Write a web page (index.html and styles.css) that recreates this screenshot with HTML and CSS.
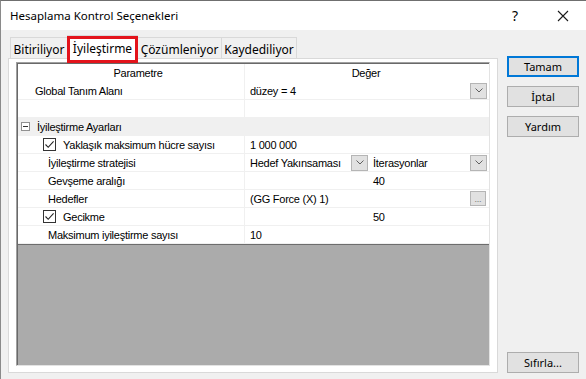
FILE: index.html
```html
<!DOCTYPE html>
<html>
	<head>
		<meta charset="UTF-8">
		<title>Hesaplama Kontrol Seçenekleri</title>
		<link rel="stylesheet" href="styles.css">
	</head>
	<body>
		<div class="window">
			<div class="titlebar">
				<span class="title">Hesaplama Kontrol Seçenekleri</span>
				<span class="help">?</span>
				<span class="close">
					<svg width="12" height="12" viewBox="0 0 12 12"><path d="M1 1L11 11M11 1L1 11" stroke="#1a1a1a" stroke-width="1.1" fill="none"/></svg>
				</span>
			</div>
			<div class="body">
				<div class="main">
					<div class="tabs">
						<div class="tab t1">Bitiriliyor</div>
						<div class="tab active">İyileştirme</div>
						<div class="tab t3">Çözümleniyor</div>
						<div class="tab t4">Kaydediliyor</div>
					</div>
					<div class="panel">
						<div class="grid">
							<div class="row head">
								<div class="name">Parametre</div>
								<div class="value">Değer</div>
							</div>
							<div class="row">
								<div class="name lvl0">Global Tanım Alanı</div>
								<div class="value"><span class="txt">düzey = 4</span><span class="drop"><svg width="8" height="5" viewBox="0 0 8 5"><path d="M0.5 0.5L4 4L7.5 0.5" stroke="#606060" fill="none"/></svg></span></div>
							</div>
							<div class="row blank">
								<div class="name"></div>
								<div class="value"></div>
							</div>
							<div class="row category">
								<div class="name lvl0"><span class="toggle"></span>İyileştirme Ayarları</div>
							</div>
							<div class="row">
								<div class="name lvl1"><span class="check"><svg width="11" height="11" viewBox="0 0 11 11"><path d="M1.5 5.5L4.2 8.3L9.6 2.3" stroke="#222" stroke-width="1.1" fill="none"/></svg></span>Yaklaşık maksimum hücre sayısı</div>
								<div class="value"><span class="txt">1 000 000</span></div>
							</div>
							<div class="row">
								<div class="name lvl2">İyileştirme stratejisi</div>
								<div class="value split">
									<div class="sub"><span class="txt">Hedef Yakınsaması</span><span class="drop"><svg width="8" height="5" viewBox="0 0 8 5"><path d="M0.5 0.5L4 4L7.5 0.5" stroke="#606060" fill="none"/></svg></span></div>
									<div class="sub second"><span class="txt">İterasyonlar</span><span class="drop"><svg width="8" height="5" viewBox="0 0 8 5"><path d="M0.5 0.5L4 4L7.5 0.5" stroke="#606060" fill="none"/></svg></span></div>
								</div>
							</div>
							<div class="row">
								<div class="name lvl2">Gevşeme aralığı</div>
								<div class="value split">
									<div class="sub"></div>
									<div class="sub second"><span class="txt">40</span></div>
								</div>
							</div>
							<div class="row">
								<div class="name lvl2">Hedefler</div>
								<div class="value"><span class="txt">(GG Force (X) 1)</span><span class="drop dots">...</span></div>
							</div>
							<div class="row">
								<div class="name lvl1"><span class="check"><svg width="11" height="11" viewBox="0 0 11 11"><path d="M1.5 5.5L4.2 8.3L9.6 2.3" stroke="#222" stroke-width="1.1" fill="none"/></svg></span>Gecikme</div>
								<div class="value split">
									<div class="sub"></div>
									<div class="sub second"><span class="txt">50</span></div>
								</div>
							</div>
							<div class="row">
								<div class="name lvl2">Maksimum iyileştirme sayısı</div>
								<div class="value"><span class="txt">10</span></div>
							</div>
							<div class="empty"></div>
						</div>
					</div>
				</div>
				<div class="side">
					<button class="btn default">Tamam</button>
					<button class="btn">İptal</button>
					<button class="btn">Yardım</button>
					<button class="btn reset">Sıfırla...</button>
				</div>
			</div>
		</div>
	</body>
</html>
```

FILE: styles.css
```css
html, body {
	margin: 0;
	padding: 0;
	box-sizing: border-box;
}

*, *::before, *::after {
	box-sizing: inherit;
}

body {
	width: 586px;
	height: 379px;
	overflow: hidden;
	background-color: #f0f0f0;
	font-family: 'Noto Sans', 'Liberation Sans', sans-serif;
	color: #000;
}

.window {
	height: 379px;
	border-top: 1px solid #6f6f6f;
	border-left: 1px solid #8a8a8a;
	display: flex;
	flex-direction: column;
}

.titlebar {
	height: 29px;
	background-color: #fff;
	display: flex;
	align-items: center;
	font-size: 11.5px;
}

.title {
	padding-left: 9px;
	flex: 1;
}

.help {
	font-size: 14px;
	width: 14px;
	margin-right: 31px;
}

.close {
	width: 12px;
	margin-right: 17px;
	display: flex;
}

.body {
	flex: 1;
	display: flex;
	padding: 0 0 6px 7px;
}

.main {
	width: 490px;
	flex: none;
	display: flex;
	flex-direction: column;
}

/* tabs */
.tabs {
	height: 28px;
	display: flex;
	align-items: flex-end;
	padding-left: 2px;
	font-size: 12px;
}

.tab {
	height: 21px;
	display: flex;
	align-items: center;
	justify-content: center;
	padding-top: 3px;
	border: 1px solid #d9d9d9;
	border-bottom: none;
	background-color: #f0f0f0;
	margin-right: -1px;
}

.t1 { width: 58px; }
.t3 { width: 85px; }
.t4 { width: 76px; }

.tab.active {
	position: relative;
	width: 71px;
	height: 24px;
	padding-top: 1px;
	background-color: #fff;
	z-index: 1;
	margin-bottom: -1px;
}

.tab.active::after {
	content: '';
	position: absolute;
	left: -1px;
	right: -1px;
	top: 0;
	bottom: -4px;
	border: 3px solid #e3131b;
}

.panel {
	flex: 1;
	background-color: #fff;
	border: 1px solid #d9d9d9;
	padding: 3px 7px 6px 7px;
	display: flex;
}

/* property grid */
.grid {
	width: 474px;
	min-width: 0;
	overflow: hidden;
	display: flex;
	flex-direction: column;
	border-top: 1px solid #a0a0a0;
	border-left: 1px solid #a0a0a0;
	border-right: 1px solid #e3e3e3;
	border-bottom: 1px solid #e3e3e3;
	box-shadow: inset 1px 1px 0 #696969;
	padding: 1px 0 0 1px;
	font-family: 'Liberation Sans', Arial, sans-serif;
	font-size: 11px;
	letter-spacing: -0.25px;
}

.row {
	height: 18px;
	flex: none;
	display: flex;
	border-bottom: 1px solid #f0f0f0;
}

.name {
	width: 227px;
	flex: none;
	display: flex;
	align-items: center;
	border-right: 1px solid #f0f0f0;
	white-space: nowrap;
}

.value {
	flex: 1;
	min-width: 0;
	display: flex;
	align-items: center;
	padding-right: 2px;
}

.head {
	border-bottom: none;
}

.head .name {
	justify-content: center;
	padding-left: 14px;
}

.head .value {
	justify-content: center;
}

.lvl0 { padding-left: 17px; }
.lvl1 { padding-left: 25px; }
.lvl2 { padding-left: 30px; }

.category {
	background-color: #f0f0f0;
}

.category .name {
	width: auto;
	border-right: none;
	padding-left: 3px;
}

.toggle {
	width: 9px;
	height: 9px;
	border: 1px solid #919191;
	margin-right: 7px;
	position: relative;
	background-color: #fff;
}

.toggle::after {
	content: '';
	position: absolute;
	left: 1px;
	right: 1px;
	top: 3px;
	height: 1px;
	background-color: #333;
}

.check {
	width: 13px;
	height: 13px;
	border: 1px solid #333;
	background-color: #fff;
	margin-right: 7px;
	display: flex;
	align-items: center;
	justify-content: center;
}

.txt {
	flex: 1;
	min-width: 0;
	padding-left: 5px;
	white-space: nowrap;
}

.drop {
	width: 17px;
	height: 16px;
	flex: none;
	background-color: #e1e1e1;
	border: 1px solid #b5b5b5;
	display: flex;
	align-items: center;
	justify-content: center;
}

.dots {
	font-size: 9px;
	color: #777;
	align-items: flex-end;
	padding-bottom: 2px;
	line-height: 8px;
	width: 16px;
	height: 15px;
	margin-right: 1px;
}

.split .sub {
	width: 125px;
	flex: none;
	height: 100%;
	display: flex;
	align-items: center;
	padding-right: 2px;
}

.split .sub.second {
	flex: 1;
	min-width: 0;
	padding-right: 0;
}

.split .sub.second .txt {
	padding-left: 3px;
}

.empty {
	flex: 1;
	background-color: #ababab;
	border-top: 1px solid #6d6d6d;
}

/* buttons */
.side {
	width: 72px;
	flex: none;
	margin-left: 9px;
	padding-top: 26px;
	display: flex;
	flex-direction: column;
}

.btn {
	height: 21px;
	margin-bottom: 9px;
	background-color: #e1e1e1;
	border: 1px solid #adadad;
	font-family: 'Noto Sans', 'Liberation Sans', sans-serif;
	font-size: 11px;
	padding: 0;
	color: #000;
}

.btn.default {
	border: 2px solid #0078d7;
}

.btn.reset {
	margin-top: auto;
	margin-bottom: 0;
}
```
